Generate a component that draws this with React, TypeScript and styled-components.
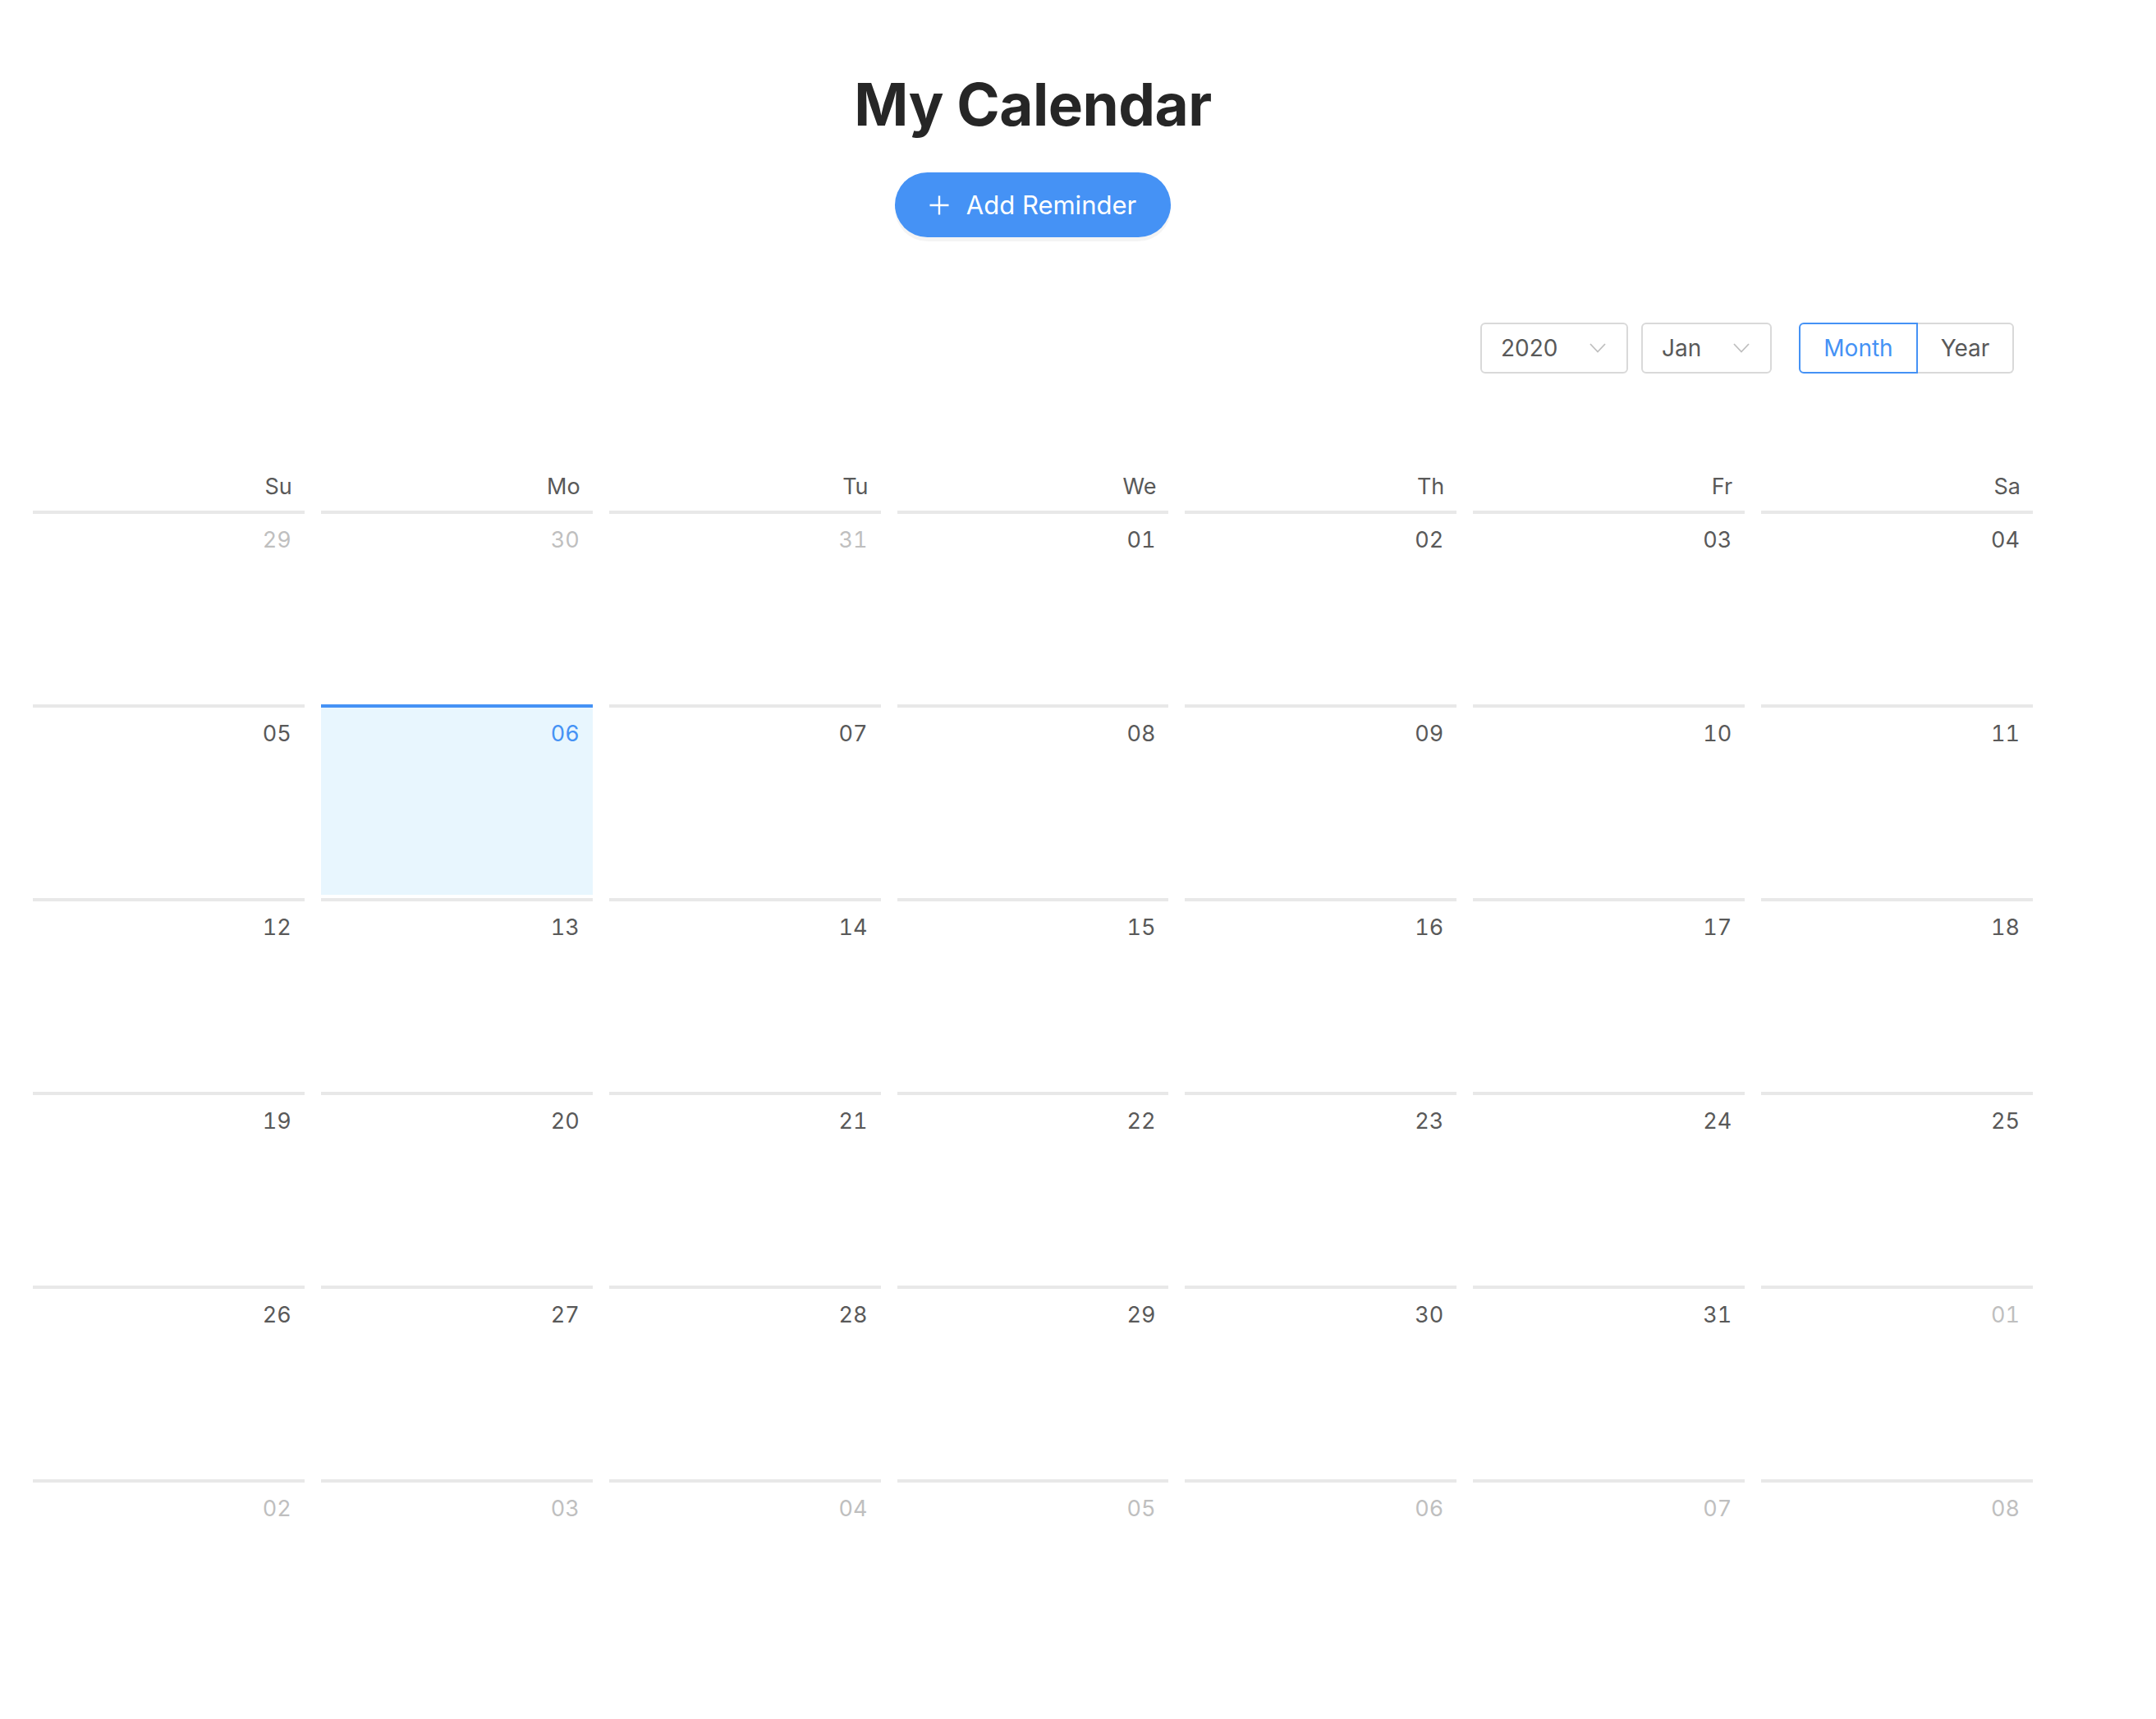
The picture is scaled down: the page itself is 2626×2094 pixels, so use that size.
import { FC } from "react";
import styled, { createGlobalStyle } from "styled-components";

const BLUE = "#4592f5";
const WEEK_DAYS = ["Su", "Mo", "Tu", "We", "Th", "Fr", "Sa"];

type Day = {
  key: string;
  label: string;
  inMonth: boolean;
  today: boolean;
};

const buildWeeks = (year: number, month: number, today: number): Day[][] => {
  const first = new Date(year, month, 1);
  const weeks: Day[][] = [];
  for (let w = 0; w < 6; w++) {
    const row: Day[] = [];
    for (let d = 0; d < 7; d++) {
      const date = new Date(year, month, 1 - first.getDay() + w * 7 + d);
      const inMonth = date.getMonth() === month;
      row.push({
        key: date.toDateString(),
        label: String(date.getDate()).padStart(2, "0"),
        inMonth,
        today: inMonth && date.getDate() === today,
      });
    }
    weeks.push(row);
  }
  return weeks;
};

const PlusIcon: FC = () => (
  <svg width="24" height="24" viewBox="0 0 24 24" fill="none">
    <path d="M12 0.5V23.5M0.5 12H23.5" stroke="#fff" strokeWidth="2.4" />
  </svg>
);

const ChevronIcon: FC = () => (
  <svg width="20" height="12" viewBox="0 0 20 12" fill="none">
    <path d="M1 1L10 10.5L19 1" stroke="#bfbfbf" strokeWidth="1.8" />
  </svg>
);

const App: FC = () => {
  const weeks = buildWeeks(2020, 0, 6);

  return (
    <>
      <GlobalStyle />
      <SPage>
        <STitle>My Calendar</STitle>

        <SActions>
          <SAddButton type="button">
            <PlusIcon />
            <span>Add Reminder</span>
          </SAddButton>
        </SActions>

        <SHeader>
          <SSelect $width={180}>
            <span>2020</span>
            <ChevronIcon />
          </SSelect>
          <SSelect $width={159} $gap={16}>
            <span>Jan</span>
            <ChevronIcon />
          </SSelect>
          <SRadioGroup>
            <SRadio $active $width={145}>
              Month
            </SRadio>
            <SRadio $width={117}>Year</SRadio>
          </SRadioGroup>
        </SHeader>

        <SGrid>
          {WEEK_DAYS.map((day) => (
            <SWeekDay key={day}>{day}</SWeekDay>
          ))}
          {weeks.map((week) =>
            week.map((day) => (
              <SDate key={day.key} $inMonth={day.inMonth} $today={day.today}>
                {day.label}
              </SDate>
            ))
          )}
        </SGrid>
      </SPage>
    </>
  );
};

const GlobalStyle = createGlobalStyle`
  body {
    margin: 0;
    background: #fff;
    font-family: Inter, "Noto Sans", sans-serif;
    color: #595959;
  }
`;

const SPage = styled.div`
  width: 2456px;
  margin-left: 30px;
  display: flex;
  flex-direction: column;
`;

const STitle = styled.h1`
  margin: 83px 0 0;
  font-size: 71px;
  line-height: 88px;
  font-weight: 700;
  color: #262626;
  text-align: center;
  letter-spacing: -0.5px;
`;

const SActions = styled.div`
  display: flex;
  justify-content: center;
  margin-top: 39px;
`;

const SAddButton = styled.button`
  display: inline-flex;
  align-items: center;
  justify-content: center;
  gap: 21px;
  width: 336px;
  height: 79px;
  padding: 0;
  border: none;
  border-radius: 40px;
  background: ${BLUE};
  box-shadow: 0 5px 0 rgba(0, 0, 0, 0.045);
  color: #fff;
  font-family: inherit;
  font-size: 31px;
  cursor: pointer;
`;

const SHeader = styled.div`
  display: flex;
  justify-content: flex-end;
  align-items: center;
  margin-top: 104px;
  margin-bottom: 118px;
  padding-right: 33px;
`;

const SSelect = styled.div<{ $width: number; $gap?: number }>`
  box-sizing: border-box;
  width: ${(p) => p.$width}px;
  height: 62px;
  margin-left: ${(p) => p.$gap ?? 0}px;
  padding: 0 25px 0 23px;
  display: flex;
  align-items: center;
  justify-content: space-between;
  border: 2px solid #d9d9d9;
  border-radius: 6px;
  font-size: 28px;
  color: #595959;
`;

const SRadioGroup = styled.div`
  display: flex;
  margin-left: 33px;
`;

const SRadio = styled.div<{ $active?: boolean; $width: number }>`
  box-sizing: border-box;
  width: ${(p) => p.$width}px;
  height: 62px;
  display: flex;
  align-items: center;
  justify-content: center;
  font-size: 28px;
  color: ${(p) => (p.$active ? BLUE : "#595959")};
  border: 2px solid ${(p) => (p.$active ? BLUE : "#d9d9d9")};
  &:first-child {
    border-radius: 6px 0 0 6px;
  }
  &:last-child {
    border-left: none;
    border-radius: 0 6px 6px 0;
  }
`;

const SGrid = styled.div`
  display: grid;
  grid-template-columns: repeat(7, 1fr);
`;

const SWeekDay = styled.div`
  padding: 0 25px 9px 0;
  text-align: right;
  font-size: 27px;
  line-height: 40px;
  color: #595959;
`;

const SDate = styled.div<{ $inMonth: boolean; $today: boolean }>`
  box-sizing: border-box;
  height: 232px;
  margin: 0 10px 4px;
  padding: 10px 16px 0;
  border-top: 4px solid ${(p) => (p.$today ? BLUE : "#e8e8e8")};
  background: ${(p) => (p.$today ? "#e8f6fe" : "transparent")};
  text-align: right;
  font-size: 27px;
  font-variant-numeric: tabular-nums;
  line-height: 44px;
  color: ${(p) => (p.$today ? BLUE : p.$inMonth ? "#595959" : "#bfbfbf")};
`;

export default App;
